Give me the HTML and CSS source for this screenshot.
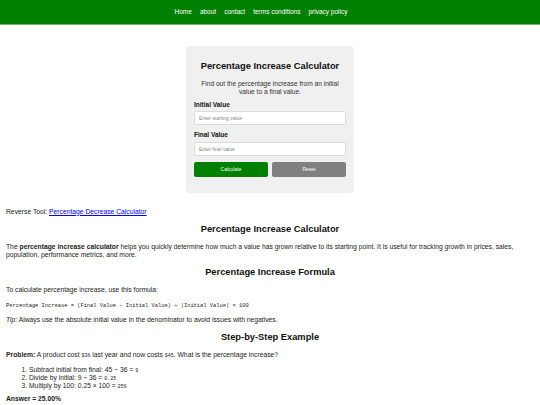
FILE: index.html
```html
<!DOCTYPE html>
<html lang="en">
<head>
<meta charset="utf-8">
<title>Percentage Increase Calculator</title>
<link rel="stylesheet" href="styles.css">
</head>
<body>
<header class="topbar">
  <nav class="nav">
    <a href="#">Home</a>
    <a href="#">about</a>
    <a href="#">contact</a>
    <a href="#">terms conditions</a>
    <a href="#">privacy policy</a>
  </nav>
</header>

<section class="card">
  <h1 class="card-title">Percentage Increase Calculator</h1>
  <p class="card-desc">Find out the percentage increase from an initial value to a final value.</p>
  <label class="field-label">Initial Value</label>
  <input class="field" type="text" placeholder="Enter starting value">
  <label class="field-label">Final Value</label>
  <input class="field" type="text" placeholder="Enter final value">
  <div class="buttons">
    <button class="btn btn-calc">Calculate</button>
    <button class="btn btn-reset">Reset</button>
  </div>
</section>

<main class="content">
  <p class="reverse">Reverse Tool: <a href="#">Percentage Decrease Calculator</a></p>
  <h2>Percentage Increase Calculator</h2>
  <p>The <strong>percentage increase calculator</strong> helps you quickly determine how much a value has grown relative to its starting point. It is useful for tracking growth in prices, sales, population, performance metrics, and more.</p>
  <h2>Percentage Increase Formula</h2>
  <p>To calculate percentage increase, use this formula:</p>
  <p class="formula"><code>Percentage Increase = (Final Value − Initial Value) ÷ |Initial Value| × 100</code></p>
  <p><em>Tip:</em> Always use the absolute initial value in the denominator to avoid issues with negatives.</p>
  <h2>Step-by-Step Example</h2>
  <p><strong>Problem:</strong> A product cost <code>$36</code> last year and now costs <code>$45</code>. What is the percentage increase?</p>
  <ol class="steps">
    <li>Subtract initial from final: 45 − 36 = <code>9</code></li>
    <li>Divide by initial: 9 ÷ 36 = <code>0.25</code></li>
    <li>Multiply by 100: 0.25 × 100 = <code>25%</code></li>
  </ol>
  <p class="answer"><strong>Answer = 25.00%</strong></p>
</main>
</body>
</html>
```
FILE: styles.css
```css
* { box-sizing: border-box; }
html, body { margin: 0; padding: 0; }
body {
  font-family: "Liberation Sans", Arial, sans-serif;
  font-size: 6.75px;
  line-height: 8px;
  color: #222;
  background: #fff;
}
.topbar {
  background: #008000;
  height: 25px;
  border-bottom: 1px solid #66bb66;
  display: flex;
  align-items: center;
  justify-content: center;
}
.nav {
  display: flex;
  gap: 8px;
  font-size: 6.5px;
  padding-right: 18px;
}
.nav a {
  color: #ffffff;
  text-decoration: none;
}
.card {
  width: 168px;
  margin: 21px auto 0;
  background: #f0f0f0;
  border-radius: 4px;
  padding: 14px 8px 16px;
  display: flex;
  flex-direction: column;
}
.card-title {
  margin: 0;
  text-align: center;
  font-size: 9.3px;
  line-height: 12px;
  color: #111;
}
.card-desc {
  margin: 8px 0 0;
  text-align: center;
  font-size: 6.6px;
  line-height: 7.5px;
  color: #333;
}
.field-label {
  font-weight: bold;
  margin-top: 5.5px;
  font-size: 6.5px;
  line-height: 8px;
  color: #111;
}
.field-label + .field { margin-top: 2.5px; }
.field + .field-label { margin-top: 6px; }
.field {
  height: 14px;
  border: 1px solid #dcdcdc;
  border-radius: 2px;
  background: #fff;
  padding: 0 4px;
  font-family: "Liberation Sans", Arial, sans-serif;
  font-size: 5px;
}
.field::placeholder { color: #888; }
.buttons {
  display: flex;
  gap: 4px;
  margin-top: 6px;
}
.btn {
  flex: 1;
  height: 15px;
  border: none;
  border-radius: 2px;
  color: #fff;
  font-family: "Liberation Sans", Arial, sans-serif;
  font-size: 5px;
}
.btn-calc { background: #008000; }
.btn-reset { background: #808080; }
.content {
  padding: 0 6px;
  margin-top: 15px;
}
.content p { margin: 0 0 7px; }
.content h2 {
  text-align: center;
  font-size: 9.3px;
  line-height: 13px;
  margin: 7px 0;
  color: #111;
}
.content a { color: #0000ee; }
code {
  font-family: "Liberation Mono", "DejaVu Sans Mono", monospace;
  font-size: 5px;
  line-height: 5px;
}
.content p.formula { line-height: 7px; }
.formula code { font-size: 5.4px; }
.steps {
  margin: 0 0 5px;
  padding-left: 23px;
}
```
